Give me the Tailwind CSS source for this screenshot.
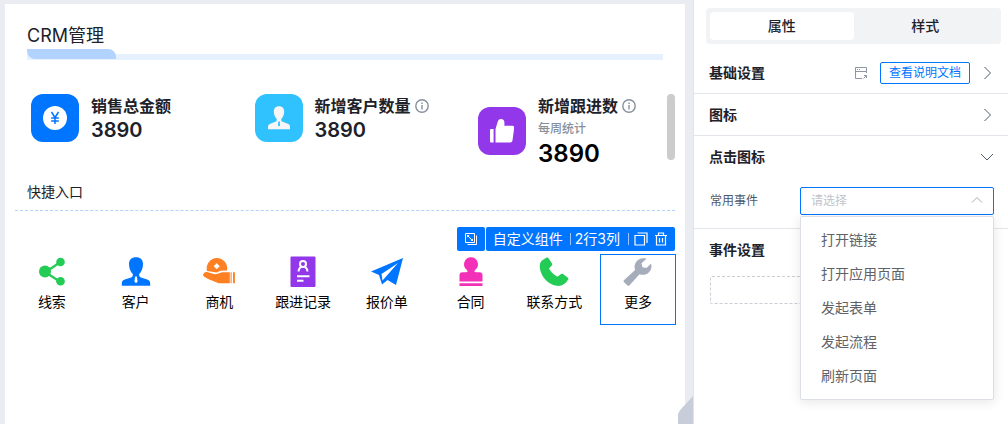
<!DOCTYPE html>
<html lang="zh-CN">
  <head>
    <meta charset="UTF-8" />
    <meta name="viewport" content="width=device-width, initial-scale=1.0" />
    <title>CRM管理</title>
    <script src="https://cdn.jsdelivr.net/npm/@tailwindcss/browser@4"></script>
  </head>
  <body class="flex min-h-screen bg-[#ebecf1] font-['Inter','Noto_Sans_CJK_SC',sans-serif] text-sm text-[#1d2129]">
    <!-- Canvas -->
    <main class="relative flex min-w-0 flex-1 pt-1 pr-2 pl-[5px]">
      <div class="min-w-0 flex-1 bg-white">
        <!-- Title -->
        <header class="pt-[19px] pr-[22px] pl-[22px]">
          <h1 class="text-lg leading-[26px]">CRM管理</h1>
          <div class="relative h-[11px] pt-[5px]">
            <div class="h-[6px] bg-[#e6f1ff]"></div>
            <div class="absolute top-0 left-0 h-[10px] w-[89px] rounded-tr-lg rounded-bl-lg bg-[#b3d3ff]"></div>
          </div>
        </header>

        <!-- Figures -->
        <section class="relative mt-[34px] grid grid-cols-[1fr_1fr_203px] items-start pr-1 pl-[26px]">
          <div class="flex items-center gap-3">
            <div class="flex size-12 shrink-0 items-center justify-center rounded-xl bg-[#0075ff]">
              <svg class="size-6" viewBox="0 0 24 24" fill="none">
                <circle cx="12" cy="12" r="12" fill="#fff" />
                <path d="M8.500 6l3.500 5.500 3.500-5.500M12 11.500v6.500M8.200 12h7.600M8.200 15h7.600" stroke="#0075ff" stroke-width="1.500" />
              </svg>
            </div>
            <div>
              <h2 class="text-base leading-6 font-bold">销售总金额</h2>
              <p class="text-xl leading-6 font-semibold">3890</p>
            </div>
          </div>
          <div class="flex items-center gap-3">
            <div class="flex size-12 shrink-0 items-center justify-center rounded-xl bg-[#2fc2ff]">
              <svg class="size-6" viewBox="0 0 24 24" fill="#f7f5f5">
                <path fill-rule="evenodd" d="M12 .2c3.300 0 5.200 2.200 5.200 5.300 0 3.400-1.400 5.800-2.900 7.500v1.200c0 .9.500 1.300 1.300 1.600l4.400 1.600c2 .7 3 1.600 3 3.600v2.200H1V21c0-2 1-2.900 3-3.600l4.400-1.600c.8-.3 1.300-.7 1.300-1.600V13C8.200 11.300 6.800 8.900 6.800 5.500 6.800 2.400 8.700.2 12 .2zM11.200 15.500l-.2 4 1 1 1-1-.2-4z" />
              </svg>
            </div>
            <div>
              <h2 class="flex items-center gap-1 text-base leading-6 font-bold">
                新增客户数量
                <svg class="size-[14px]" viewBox="0 0 14 14" fill="none" stroke="#86909c" stroke-width="1.400">
                  <circle cx="7" cy="7" r="6.200" /><path d="M7 6v4.500M7 3.500v1.500" />
                </svg>
              </h2>
              <p class="text-xl leading-6 font-semibold">3890</p>
            </div>
          </div>
          <div class="flex items-center gap-3">
            <div class="flex size-12 shrink-0 items-center justify-center rounded-xl bg-[#9237ea]">
              <svg class="size-6" viewBox="0 0 24 24" fill="#fff">
                <path d="M1 10h2.600v13.500H1a1 1 0 0 1-1-1V11a1 1 0 0 1 1-1z" />
                <path d="M5.500 23.500V10l2.300-7.500C8.300.8 9.400 0 11.200 0c2 0 3.200 1.300 3.200 3.300v3.400h8c1.400 0 2 .8 1.800 2L22.500 21.500c-.3 1.300-1 2-2.200 2z" />
              </svg>
            </div>
            <div>
              <h2 class="flex items-center gap-1 text-base leading-6 font-bold">
                新增跟进数
                <svg class="size-[14px]" viewBox="0 0 14 14" fill="none" stroke="#86909c" stroke-width="1.400">
                  <circle cx="7" cy="7" r="6.200" /><path d="M7 6v4.500M7 3.500v1.500" />
                </svg>
              </h2>
              <p class="text-xs leading-[22px] font-medium text-[#86909c]">每周统计</p>
              <p class="text-2xl leading-7 font-semibold text-black">3890</p>
            </div>
          </div>
          <div class="absolute top-0 right-[10px] h-[66px] w-2 rounded-full bg-[#ccc]"></div>
        </section>

        <!-- Shortcuts -->
        <section class="mt-[11px]">
          <h2 class="mx-[10px] border-b border-dashed border-[#b3d3ff] pb-[5px] pl-3 leading-[26px]">快捷入口</h2>
          <div class="mx-[5px] mt-[43px] grid grid-cols-8 text-black">
            <a href="#" class="mx-1 flex h-[71px] flex-col items-center border border-transparent pt-px">
              <svg class="size-8" viewBox="0 0 32 32" fill="#22cc55">
                <path d="M9 16.500L24.500 6M9 16l15.500 10" stroke="#22cc55" stroke-width="2.200" />
                <circle cx="9" cy="15.500" r="6" /><circle cx="24.500" cy="6" r="4.300" /><circle cx="24.500" cy="25.200" r="4.300" />
              </svg>
              <span class="leading-7">线索</span>
            </a>
            <a href="#" class="mx-1 flex h-[71px] flex-col items-center border border-transparent pt-px">
              <svg class="size-8" viewBox="0 0 32 32" fill="#0075ff">
                <path fill-rule="evenodd" d="M16 1.200c4.500 0 7 2.700 7 6.800 0 4.500-1.600 7.800-3.800 10v1.300c0 1.100.6 1.700 1.700 2.100l5.600 1.900c2.700.9 3.700 1.900 3.700 4.200v2.300H1.800v-2.300c0-2.300 1-3.300 3.700-4.200l5.600-1.900c1.100-.4 1.700-1 1.700-2.100V18C10.600 15.800 9 12.500 9 8c0-4.100 2.500-6.800 7-6.800zM15.200 20.500l-.8 5 1.600 1.800 1.600-1.800-.8-5z" />
              </svg>
              <span class="leading-7">客户</span>
            </a>
            <a href="#" class="mx-1 flex h-[71px] flex-col items-center border border-transparent pt-px">
              <svg class="size-8" viewBox="0 0 32 32" fill="#ff8022">
                <path fill-rule="evenodd" d="M4 15A10.300 10.300 0 1 1 24 14.500l-6.500.3-4 1.700zM13.700 7.300l-3 3 3 3 3-3z" />
                <path d="M0 19.500c.3-2.800 2.200-4 4.800-3.200l5.200 1.500c1.700.5 3.200.4 4.700-.1l4.300-1.400h7.800v11H15.500C10 24.500 3 23 0 19.500zM27.600 16.300h1v11h-1zM30 16.300h1.900v11H30z" />
              </svg>
              <span class="leading-7">商机</span>
            </a>
            <a href="#" class="mx-1 flex h-[71px] flex-col items-center border border-transparent pt-px">
              <svg class="size-8" viewBox="0 0 32 32" fill="none" stroke="#fff" stroke-width="2">
                <rect x="3.500" y="0.500" width="25" height="30.500" rx="1" fill="#9237ea" stroke="none" />
                <circle cx="16" cy="8" r="3" /><path d="M11.500 15.500c.3-2.800 1.500-4 3-4.800M20.500 15.500c-.3-2.800-1.500-4-3-4.800M10 20.300h12.500M10 24.800h6.500" />
              </svg>
              <span class="leading-7">跟进记录</span>
            </a>
            <a href="#" class="mx-1 flex h-[71px] flex-col items-center border border-transparent pt-px">
              <svg class="size-8" viewBox="0 0 32 32" fill="#0075ff">
                <path fill-rule="evenodd" d="M32 2L0 15.500l8 3.500 3 9.500 5.500-4.500 8.500 5zM27 7L11.500 24.500 10.500 18z" />
              </svg>
              <span class="leading-7">报价单</span>
            </a>
            <a href="#" class="mx-1 flex h-[71px] flex-col items-center border border-transparent pt-px">
              <svg class="size-8" viewBox="0 0 32 32" fill="#f230b8">
                <path d="M16 1.200a7 7 0 0 1 4.300 12.500c-.6.500-.8 1-.8 1.600 0 .6.500.9 1.300.9h3.700c2.100 0 3 1 3 3v6.300h-23v-6.300c0-2 .9-3 3-3h3.700c.8 0 1.300-.3 1.300-.9 0-.6-.2-1.100-.8-1.600A7 7 0 0 1 16 1.200zM4.500 27.300h23v2.700h-23z" />
              </svg>
              <span class="leading-7">合同</span>
            </a>
            <a href="#" class="mx-1 flex h-[71px] flex-col items-center border border-transparent pt-px">
              <svg class="size-8" viewBox="0 0 32 32" fill="#22cc55">
                <path d="M4 4.500L8.200 1.800c1-.6 1.900-.3 2.500.6l3.200 4.800c.6.900.4 1.800-.3 2.500l-2 2c-.5.500-.5 1 0 1.800 1.700 2.900 4 5 7 6.700.8.500 1.300.4 1.900-.1l2.200-1.900c.7-.6 1.500-.7 2.300-.1l4.600 3.400c.8.600 1 1.400.4 2.300-2.800 4.700-6.600 6.700-11.500 6C9.500 28 3 21 1.800 11.500 1.500 8.800 2 6.300 4 4.500z" />
              </svg>
              <span class="leading-7">联系方式</span>
            </a>
            <div class="relative mx-1">
              <a href="#" class="flex h-[71px] flex-col items-center border border-[#0075ff] pt-px">
                <svg class="size-8" viewBox="0 0 32 32" fill="#a6adba">
                  <path d="M24.500 2.700c-4.500-1.300-9 .3-11 4.200-1.200 2.400-1.200 4.700-.4 7L1.900 24.200c-.6.600-.6 1.200 0 1.800l3.600 3.600c.6.600 1.200.6 1.800 0L17.500 18.300c3 1 6.500.7 9-1.500 2.800-2.400 3.600-6 2.600-9.300L24.500 12l-4-.8-1-4z" />
                </svg>
                <span class="leading-7">更多</span>
              </a>
              <!-- Component toolbar -->
              <div class="absolute right-px bottom-full mb-[3px] flex h-6 gap-px whitespace-nowrap text-white">
                <button type="button" aria-label="选择父级" class="flex w-7 items-center justify-center rounded-xs bg-[#0075ff]">
                  <svg class="size-[14px]" viewBox="0 0 14 14" fill="none" stroke="currentColor">
                    <path d="M1.500 1.500h9v9h-9zM3.500 12.500h9v-9" /><path d="M3.500 3.500l5 5" /><path d="M3 3h2.500L3 5.500zM9 9H6.500L9 6.500z" fill="currentColor" stroke="none" />
                  </svg>
                </button>
                <div class="flex items-center rounded-xs bg-[#0075ff] pr-[7px] pl-[7px]">
                  <span>自定义组件</span>
                  <span class="mr-1 ml-[7px] h-3 w-px bg-white/60"></span>
                  <span>2行3列</span>
                  <span class="mr-[5px] ml-2 h-3 w-px bg-white/60"></span>
                  <button type="button" aria-label="复制">
                    <svg class="size-[14px]" viewBox="0 0 14 14" fill="none" stroke="currentColor" stroke-width="1.200">
                      <path d="M1 3.500h9.500v9.500H1zM3.500 1H13v10" />
                    </svg>
                  </button>
                  <button type="button" aria-label="删除" class="ml-[6px]">
                    <svg class="size-[14px]" viewBox="0 0 14 14" fill="none" stroke="currentColor" stroke-width="1.200">
                      <path d="M1 3.500h12M4.500 3.500V1h5v2.500M2.500 3.500V13h9V3.500M5.500 6v4.500M8.500 6v4.500" />
                    </svg>
                  </button>
                </div>
              </div>
            </div>
          </div>
        </section>
      </div>
      <svg class="absolute right-0 bottom-0 h-7 w-[15px]" viewBox="0 0 15 28" fill="#c8ced9">
        <path d="M15 0L4 12c-2.500 2.700-4 5-4 7v9h15z" />
      </svg>
    </main>

    <!-- Settings panel -->
    <aside class="w-[315px] shrink-0 border-l border-[#e1e3e9] bg-white pt-2">
      <div class="mr-[7px] ml-3 flex h-9 rounded bg-[#f2f3f5] p-1 font-medium">
        <button type="button" class="flex-1 rounded-sm bg-white">属性</button>
        <button type="button" class="flex-1">样式</button>
      </div>

      <div class="mt-2 flex h-[42px] items-center border-b border-[#e5e6eb] pr-[14px] pl-[15px]">
        <h3 class="flex-1 font-bold">基础设置</h3>
        <svg class="mr-3 size-[14px]" viewBox="0 0 14 14" fill="none" stroke="#8f96a3">
          <path d="M12.500 7V1.500h-11v11H8M1.500 5.500h11M3 3.500h1M5 3.500h1M9.500 12.500l3-3M10 9.500h2.500V12" />
        </svg>
        <a href="#" class="mr-[10px] h-[22px] w-[90px] rounded-xs border border-[#0075ff] text-center text-xs leading-5 text-[#0075ff]">查看说明文档</a>
        <svg class="size-[14px]" viewBox="0 0 14 14" fill="none" stroke="#4e5969"><path d="M4.500 1l6 6-6 6" /></svg>
      </div>
      <div class="flex h-[42px] items-center border-b border-[#e5e6eb] pr-[14px] pl-[15px]">
        <h3 class="flex-1 font-bold">图标</h3>
        <svg class="size-[14px]" viewBox="0 0 14 14" fill="none" stroke="#4e5969"><path d="M4.500 1l6 6-6 6" /></svg>
      </div>

      <div class="border-b border-[#e5e6eb] pb-[13px]">
        <div class="flex h-[42px] items-center pr-[14px] pl-[15px]">
          <h3 class="flex-1 font-bold">点击图标</h3>
          <svg class="size-[14px]" viewBox="0 0 14 14" fill="none" stroke="#4e5969"><path d="M1 4l6 6 6-6" /></svg>
        </div>
        <div class="mt-[9px] flex items-center pr-[14px] pl-4">
          <label for="event" class="w-[90px] text-xs text-[#4e5969]">常用事件</label>
          <div class="relative flex-1">
            <select id="event" class="block h-7 w-full appearance-none rounded-xs border border-[#0075ff] bg-white px-[10px] text-xs text-[#c0c4cc] outline-none">
              <option>请选择</option>
            </select>
            <svg class="pointer-events-none absolute top-[7px] right-[11px] size-3" viewBox="0 0 12 12" fill="none" stroke="#a8abb2"><path d="M1 8.500l5-5 5 5" /></svg>
            <ul role="listbox" aria-label="常用事件" class="absolute top-full right-0 left-0 z-10 mt-px rounded-xs border border-[#dcdfe6] bg-white py-[6px] leading-[34px] text-[#606266] shadow-[0_2px_12px_rgba(0,0,0,0.1)]">
              <li role="option" class="px-5">打开链接</li>
              <li role="option" class="px-5">打开应用页面</li>
              <li role="option" class="px-5">发起表单</li>
              <li role="option" class="px-5">发起流程</li>
              <li role="option" class="px-5">刷新页面</li>
            </ul>
          </div>
        </div>
      </div>

      <div class="pr-[14px] pl-[15px]">
        <h3 class="leading-[42px] font-bold">事件设置</h3>
        <div class="mt-[5px] ml-px h-7 rounded-xs border border-dashed border-[#c9cdd4]"></div>
      </div>
    </aside>
  </body>
</html>
